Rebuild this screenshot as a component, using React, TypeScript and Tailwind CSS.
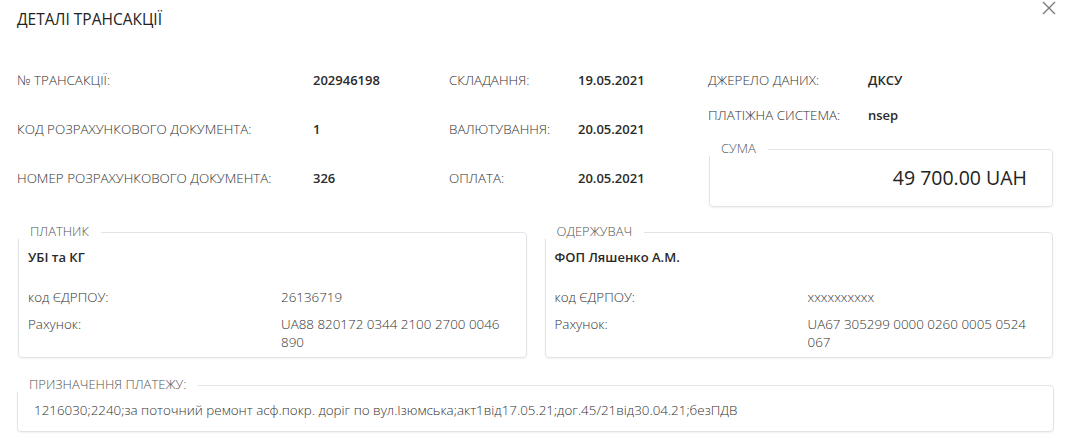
import React from 'react';

const font = { fontFamily: '"Open Sans", "Noto Sans", sans-serif' };

interface BoxProps {
  title: string;
  className?: string;
  children: React.ReactNode;
}

const Box = ({ title, className = '', children }: BoxProps) => (
  <div className={`relative rounded border border-[#e1e5ea] shadow-[0_1px_2px_rgba(0,0,0,0.06)] ${className}`}>
    <span className="absolute -left-px -top-[10px] bg-white pl-3 pr-3 text-[13px] font-light leading-[16px] text-[#555]">
      {title}
    </span>
    {children}
  </div>
);

const Label = ({ children }: { children: React.ReactNode }) => (
  <span className="text-[13.4px] font-light text-[#333]">{children}</span>
);

const Value = ({ children }: { children: React.ReactNode }) => (
  <span className="text-[13px] font-semibold text-[#2a2a2a]">{children}</span>
);

const Party = ({ title, name, code, account }: { title: string; name: string; code: string; account: string }) => (
  <Box title={title} className="h-[126px] flex-1">
    <div className="px-[9px] pt-[15px]">
      <div className="text-[13px] font-semibold leading-[18px] text-[#2a2a2a]">{name}</div>
      <div className="mt-[22px] grid grid-cols-[253px_1fr] gap-y-[9px] text-[13.4px] font-light leading-[18px] text-[#333]">
        <span>код ЄДРПОУ:</span>
        <span>{code}</span>
        <span>Рахунок:</span>
        <span className="w-[228px]">{account}</span>
      </div>
    </div>
  </Box>
);

export default function App() {
  return (
    <div className="relative h-[440px] w-[1072px] overflow-hidden bg-white" style={font}>
      <button className="absolute right-[16px] top-[1px] text-[#777]">
        <svg width="14" height="14" viewBox="0 0 14 14" fill="none" stroke="currentColor" strokeWidth="1.3">
          <path d="M1 1 L13 13 M13 1 L1 13" />
        </svg>
      </button>

      <div className="px-[17px]">
        <h1 className="pt-[9px] text-[15.5px] leading-[20px] text-[#222]">ДЕТАЛІ ТРАНСАКЦІЇ</h1>

        <div className="mt-[27px] flex">
          <div className="grid h-[147px] w-[691px] grid-cols-[296px_136px_129px_1fr] auto-rows-[49px] items-center">
            <Label>№ ТРАНСАКЦІЇ:</Label>
            <Value>202946198</Value>
            <Label>СКЛАДАННЯ:</Label>
            <Value>19.05.2021</Value>

            <Label>КОД РОЗРАХУНКОВОГО ДОКУМЕНТА:</Label>
            <Value>1</Value>
            <Label>ВАЛЮТУВАННЯ:</Label>
            <Value>20.05.2021</Value>

            <Label>НОМЕР РОЗРАХУНКОВОГО ДОКУМЕНТА:</Label>
            <Value>326</Value>
            <Label>ОПЛАТА:</Label>
            <Value>20.05.2021</Value>
          </div>

          <div className="flex-1">
            <div className="grid grid-cols-[160px_1fr] auto-rows-[35px] items-center pt-[7px]">
              <Label>ДЖЕРЕЛО ДАНИХ:</Label>
              <Value>ДКСУ</Value>
              <Label>ПЛАТІЖНА СИСТЕМА:</Label>
              <Value>nsep</Value>
            </div>
            <Box title="СУМА" className="ml-px mr-[2px] mt-[16px] flex h-[58px] items-center justify-end pr-[25px]">
              <span className="text-[19.5px] text-[#222]">49 700.00 UAH</span>
            </Box>
          </div>
        </div>

        <div className="mt-[25px] flex gap-[18px] pl-px pr-[2px]">
          <Party title="ПЛАТНИК" name="УБІ та КГ" code="26136719" account="UA88 820172 0344 2100 2700 0046 890" />
          <Party title="ОДЕРЖУВАЧ" name="ФОП Ляшенко А.М." code="xxxxxxxxxx" account="UA67 305299 0000 0260 0005 0524 067" />
        </div>

        <Box title="ПРИЗНАЧЕННЯ ПЛАТЕЖУ:" className="mr-px mt-[27px] flex h-[47px] items-center pl-[16px]">
          <span className="pt-[3px] text-[13.4px] font-light text-[#333]">
            1216030;2240;за поточний ремонт асф.покр. доріг по вул.Ізюмська;акт1від17.05.21;дог.45/21від30.04.21;безПДВ
          </span>
        </Box>
      </div>
    </div>
  );
}
